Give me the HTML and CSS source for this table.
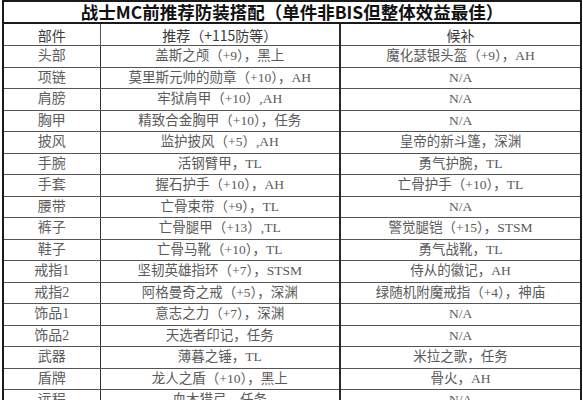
FILE: index.html
```html
<!DOCTYPE html>
<html lang="zh-CN">
<head>
<meta charset="utf-8">
<title>战士MC前推荐防装搭配</title>
<link rel="stylesheet" href="styles.css">
</head>
<body>
<table class="gear">
  <colgroup>
    <col class="c-slot">
    <col class="c-main">
    <col class="c-alt">
  </colgroup>
  <thead>
    <tr class="title-row"><th colspan="3">战士MC前推荐防装搭配（单件非BIS但整体效益最佳）</th></tr>
    <tr class="head-row"><th>部件</th><th>推荐（+115防等）</th><th class="alt">候补</th></tr>
  </thead>
  <tbody>
    <tr><td>头部</td><td>盖斯之颅（+9），黑上</td><td class="alt">魔化瑟银头盔（+9），AH</td></tr>
    <tr><td>项链</td><td>莫里斯元帅的勋章（+10），AH</td><td class="alt">N/A</td></tr>
    <tr><td>肩膀</td><td>牢狱肩甲（+10）,AH</td><td class="alt">N/A</td></tr>
    <tr><td>胸甲</td><td>精致合金胸甲（+10），任务</td><td class="alt">N/A</td></tr>
    <tr><td>披风</td><td>监护披风（+5）,AH</td><td class="alt">皇帝的新斗篷，深渊</td></tr>
    <tr><td>手腕</td><td>活钢臂甲，TL</td><td class="alt">勇气护腕，TL</td></tr>
    <tr><td>手套</td><td>握石护手（+10），AH</td><td class="alt">亡骨护手（+10），TL</td></tr>
    <tr><td>腰带</td><td>亡骨束带（+9），TL</td><td class="alt">N/A</td></tr>
    <tr><td>裤子</td><td>亡骨腿甲（+13）,TL</td><td class="alt">警觉腿铠（+15），STSM</td></tr>
    <tr><td>鞋子</td><td>亡骨马靴（+10），TL</td><td class="alt">勇气战靴，TL</td></tr>
    <tr><td>戒指1</td><td>坚韧英雄指环（+7），STSM</td><td class="alt">侍从的徽记，AH</td></tr>
    <tr><td>戒指2</td><td>阿格曼奇之戒（+5），深渊</td><td class="alt">绿随机附魔戒指（+4），神庙</td></tr>
    <tr><td>饰品1</td><td>意志之力（+7），深渊</td><td class="alt">N/A</td></tr>
    <tr><td>饰品2</td><td>天选者印记，任务</td><td class="alt">N/A</td></tr>
    <tr><td>武器</td><td>薄暮之锤，TL</td><td class="alt">米拉之歌，任务</td></tr>
    <tr><td>盾牌</td><td>龙人之盾（+10），黑上</td><td class="alt">骨火，AH</td></tr>
    <tr><td>远程</td><td>血木猎弓，任务</td><td class="alt">N/A</td></tr>
  </tbody>
</table>
</body>
</html>
```

FILE: styles.css
```css
html, body {
  margin: 0;
  padding: 0;
  background: #ffffff;
}

body {
  height: 400px;
  overflow: hidden;
}

.gear {
  margin-left: 2px;
  width: 578px;
  border-collapse: collapse;
  table-layout: fixed;
  border: 2px solid #1a1a1a;
  border-bottom: none;
}

.c-slot { width: 97px; }
.c-main { width: 240px; }
.c-alt { width: 241px; }

.gear th,
.gear td {
  padding: 0;
  text-align: center;
  vertical-align: middle;
  white-space: nowrap;
  overflow: hidden;
  border: 1px solid #555;
}

.gear .alt {
  border-left: 2px solid #2a2a2a;
}

.title-row th {
  height: 20px;
  overflow: visible;
  font-family: "Noto Sans CJK SC", "Liberation Sans", sans-serif;
  font-weight: 700;
  font-size: 17.5px;
  line-height: 20px;
  color: #111;
  border-bottom: 2px solid #1a1a1a;
}

.head-row th {
  height: 21px;
  font-family: "Noto Sans CJK SC", "Liberation Sans", sans-serif;
  font-weight: 400;
  font-size: 14px;
  line-height: 20px;
  color: #3a3a3a;
}

.gear td {
  height: 20.5px;
  font-family: "Liberation Serif", "Noto Sans CJK SC", serif;
  font-size: 13.5px;
  line-height: 20px;
  color: #5a5a5a;
}

.gear td:first-child {
  font-size: 14px;
  color: #5e5e5e;
  border-right: 1px solid #333;
}
```
